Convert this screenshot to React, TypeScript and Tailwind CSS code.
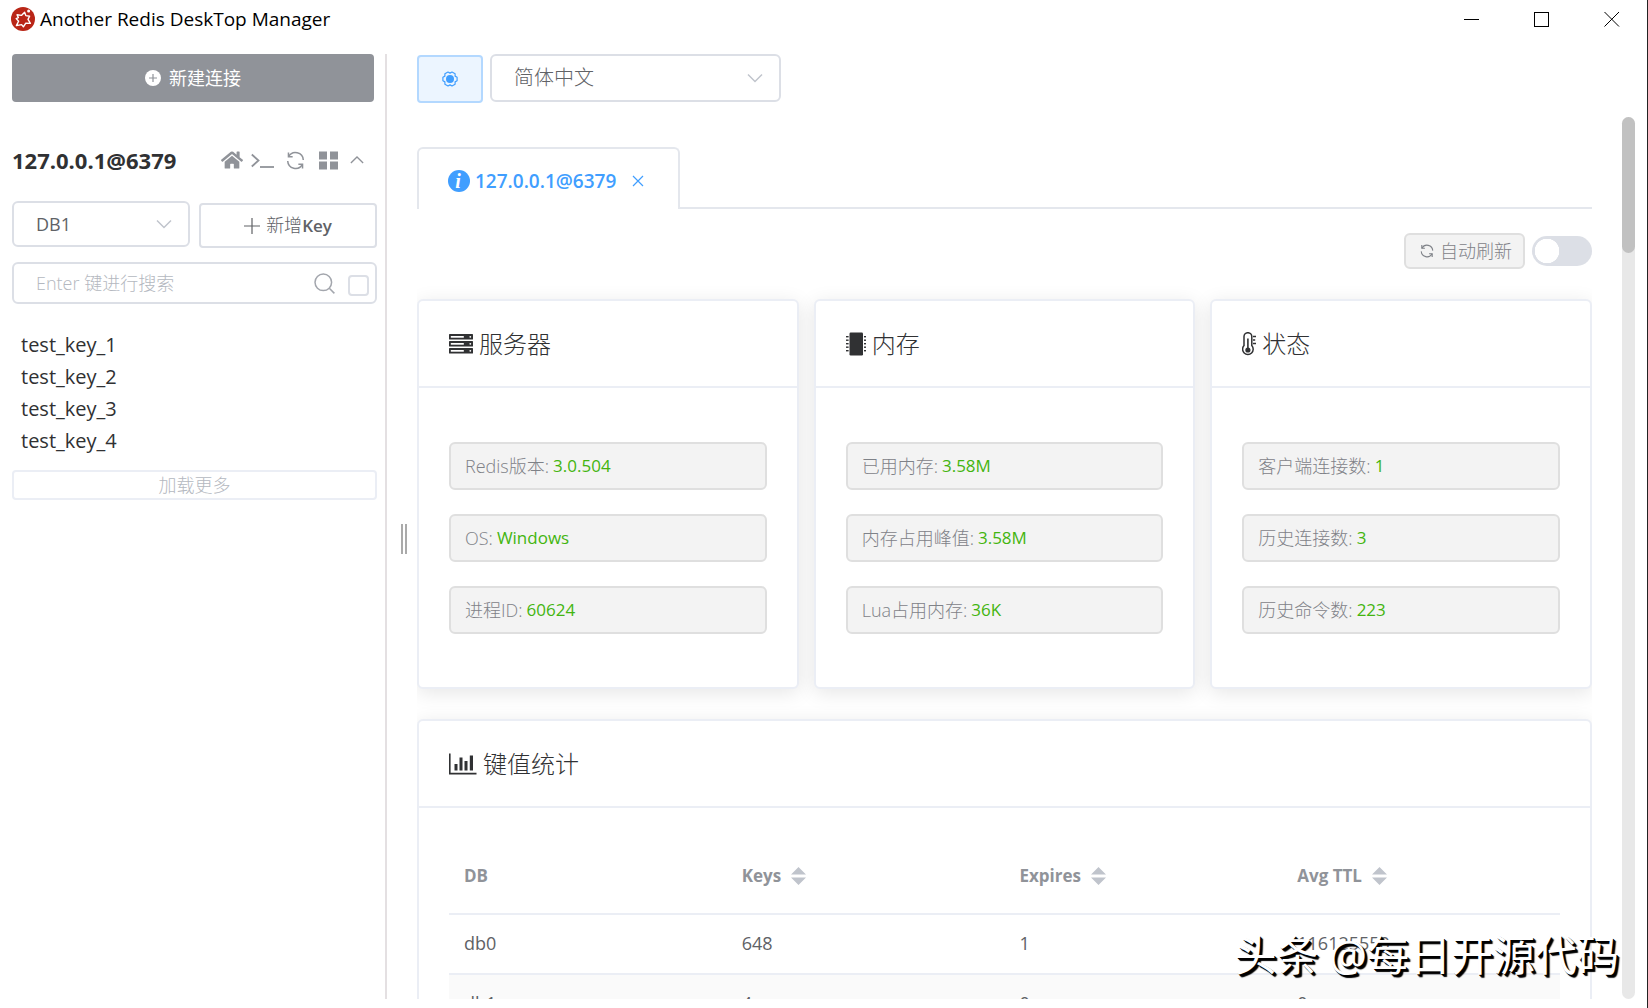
import React from "react";
import { FaHome } from "react-icons/fa";

const SANS =
  "font-['Open_Sans','Noto_Sans_CJK_SC',sans-serif]";

function Logo() {
  return (
    <svg className="size-6 shrink-0" viewBox="0 0 24 24" fill="none" aria-hidden="true">
      <circle cx="12" cy="12" r="12" fill="#b92617" />
      <path
        d="M6 7.8 L10.4 8.4 L13.6 5.2 L14.8 8.6 L18.6 9.2 L17 12.4 L19.4 16.4 L14.8 16.2 L12.4 19.8 L10.6 17.6 L5.4 18.6 L7.6 14.2 L5.2 11.6 L7.4 10.6 Z"
        stroke="#fff"
        strokeWidth="1.4"
        strokeLinejoin="round"
      />
      <circle cx="17.6" cy="4" r="1.5" fill="#fff" />
    </svg>
  );
}

function Chevron({ up = false, className = "" }: { up?: boolean; className?: string }) {
  return (
    <svg className={className} viewBox="0 0 16 10" fill="none" stroke="currentColor" strokeWidth="1.5" aria-hidden="true">
      <path d={up ? "M1 8.5 L8 1.5 L15 8.5" : "M1 1.5 L8 8.5 L15 1.5"} />
    </svg>
  );
}

function Refresh({ className = "" }: { className?: string }) {
  return (
    <svg className={className} viewBox="0 0 20 20" fill="none" stroke="currentColor" strokeWidth="1.6" aria-hidden="true">
      <path d="M2.6 1.5 V6 H7" />
      <path d="M2.8 6 A8.2 8.2 0 0 1 18.2 9.5" />
      <path d="M17.4 18.5 V14 H13" />
      <path d="M17.2 14 A8.2 8.2 0 0 1 1.8 10.5" />
    </svg>
  );
}

function ServerIcon() {
  return (
    <svg className="h-5 w-6" viewBox="0 0 24 20" fill="none" aria-hidden="true">
      {[0, 7, 14].map((y) => (
        <g key={y}>
          <rect x="0" y={y} width="24" height="5.6" rx="0.6" fill="#303133" />
          <rect x="1.8" y={y + 2} width="13" height="1.7" fill="#fff" />
          <circle cx="21.3" cy={y + 2.8} r="0.9" fill="#fff" />
        </g>
      ))}
    </svg>
  );
}

function MemoryIcon() {
  return (
    <svg className="h-6 w-5" viewBox="0 0 20 24" fill="#303133" aria-hidden="true">
      <rect x="3.5" y="0.5" width="13.5" height="23" rx="1.2" />
      {[4, 7.5, 11, 14.5, 18].map((y) => (
        <g key={y}>
          <rect x="0" y={y} width="2.6" height="1.4" />
          <rect x="18" y={y} width="2.6" height="1.4" />
        </g>
      ))}
    </svg>
  );
}

function ThermoIcon() {
  return (
    <svg className="h-6 w-3.5" viewBox="0 0 14 24" fill="none" stroke="#303133" aria-hidden="true">
      <path d="M2 13.6 V4.6 a3.9 3.9 0 0 1 7.8 0 V13.6 a5.3 5.3 0 1 1 -7.8 0 Z" strokeWidth="1.5" />
      <path d="M5.9 6.5 V18" strokeWidth="1.6" />
      <circle cx="5.9" cy="18" r="2.6" fill="#303133" stroke="none" />
      <path d="M11 4.5 h3 M11 8 h2.2 M11 11.5 h3" strokeWidth="1.4" />
    </svg>
  );
}

function ChartIcon() {
  return (
    <svg className="h-[22px] w-7" viewBox="0 0 28 22" fill="#303133" aria-hidden="true">
      <path d="M0 0.5 h1.6 V19.8 H27.5 V21.5 H0 Z" />
      <rect x="5.5" y="11" width="3" height="6.5" />
      <rect x="10.5" y="4.5" width="3" height="13" />
      <rect x="15.5" y="8" width="3" height="9.5" />
      <rect x="20.8" y="2.5" width="3.2" height="15" />
    </svg>
  );
}

function GearIcon() {
  return (
    <svg className="size-4" viewBox="0 0 16 16" fill="none" aria-hidden="true">
      <path
        d="M15.1 6.2 V9.8 L13.1 10.9 L13.1 13.2 L10 15 L8 13.9 L6 15 L2.9 13.2 L2.9 10.9 L0.9 9.8 V6.2 L2.9 5.1 L2.9 2.8 L6 1 L8 2.1 L10 1 L13.1 2.8 L13.1 5.1 Z"
        stroke="#409eff"
        strokeWidth="1.2"
        strokeLinejoin="round"
      />
      <circle cx="8" cy="8" r="4" fill="#409eff" />
    </svg>
  );
}

function TitleBar() {
  return (
    <header className="flex h-[54px] shrink-0 items-start justify-between pl-[11px]">
      <div className="flex h-[38px] items-center gap-[5px]">
        <Logo />
        <h1 className="text-[19px] text-black">Another Redis DeskTop Manager</h1>
      </div>
      <div className="flex h-[38px] text-black">
        <button aria-label="最小化" className="flex w-[70px] items-center justify-center">
          <svg className="size-4" viewBox="0 0 16 16" stroke="currentColor" shapeRendering="crispEdges"><path d="M0 8.5 H15" /></svg>
        </button>
        <button aria-label="最大化" className="flex w-[70px] items-center justify-center">
          <svg className="size-4" viewBox="0 0 16 16" stroke="currentColor" fill="none" shapeRendering="crispEdges"><rect x="0.5" y="1.5" width="14" height="14" /></svg>
        </button>
        <button aria-label="关闭" className="flex w-[70px] items-center justify-center">
          <svg className="size-4" viewBox="0 0 16 16" stroke="currentColor"><path d="M0.5 1 L15 15.5 M15 1 L0.5 15.5" /></svg>
        </button>
      </div>
    </header>
  );
}

function SelectBox({ label, value, className }: { label: string; value: string; className: string }) {
  return (
    <div className={"relative " + className}>
      <select
        aria-label={label}
        defaultValue={value}
        className="h-full w-full appearance-none rounded-md border-2 border-[#dcdfe6] bg-white px-[22px] text-[#606266]"
      >
        <option>{value}</option>
      </select>
      <Chevron className="pointer-events-none absolute top-1/2 right-[18px] h-2.5 w-4 -translate-y-1/2 text-[#c0c4cc]" />
    </div>
  );
}

const KEYS = ["test_key_1", "test_key_2", "test_key_3", "test_key_4"];

function Sidebar() {
  return (
    <aside className="flex w-[387px] shrink-0 flex-col border-r-2 border-[#e4e0e2] pr-2 pl-3">
      <button className="mr-[3px] flex h-12 items-center justify-center gap-2 rounded bg-[#909399] text-[18px] text-white">
        <svg className="size-4" viewBox="0 0 16 16" aria-hidden="true">
          <circle cx="8" cy="8" r="8" fill="#fff" />
          <path d="M8 4 V12 M4 8 H12" stroke="#909399" strokeWidth="1.2" />
        </svg>
        新建连接
      </button>

      <div className="mt-10 flex h-9 items-center justify-between pr-[13px]">
        <h2 className="text-[22px] font-bold text-[#303133]">127.0.0.1@6379</h2>
        <div className="flex items-center text-[#909399]">
          <button aria-label="主页" className="mr-2"><FaHome className="size-[22px]" /></button>
          <button aria-label="控制台" className="mr-3">
            <svg className="h-4 w-[23px]" viewBox="0 0 23 16" fill="none" stroke="currentColor" strokeWidth="1.8"><path d="M0.8 2.5 L7.5 8.5 L0.8 14.5" /><path d="M9 15 H23" /></svg>
          </button>
          <button aria-label="刷新" className="mr-3.5"><Refresh className="size-[19px]" /></button>
          <button aria-label="菜单" className="mr-3">
            <svg className="size-[19px]" viewBox="0 0 19 19" fill="currentColor"><path d="M0 0.5 h8 v8 h-8 z M11 0.5 h8 v8 h-8 z M0 10.5 h8 v8 h-8 z M11 10.5 h8 v8 h-8 z" /></svg>
          </button>
          <button aria-label="收起"><Chevron up className="h-2.5 w-3.5" /></button>
        </div>
      </div>

      <div className="mt-[23px] grid grid-cols-2 gap-[9px] text-[18px] text-[#606266]">
        <SelectBox label="DB" value="DB1" className="h-[46px]" />
        <button className="mt-0.5 flex h-[45px] items-center justify-center gap-1.5 rounded border-2 border-[#dcdfe6]">
          <svg className="size-4" viewBox="0 0 16 16" stroke="currentColor" strokeWidth="1.2" aria-hidden="true"><path d="M8 0 V16 M0 8 H16" /></svg>
          <span className="font-light">新增<span className="text-[17px] font-semibold">Key</span></span>
        </button>
      </div>

      <div className="mt-3.5 flex h-[42px] items-center rounded-md border-2 border-[#dcdfe6] pr-1.5 pl-[22px]">
        <input
          aria-label="搜索"
          placeholder="Enter 键进行搜索"
          className="min-w-0 flex-1 text-[18px] font-light outline-none placeholder:text-[#b4b8c0]"
        />
        <svg className="mr-[13px] size-[21px] text-[#a3a6ad]" viewBox="0 0 21 21" fill="none" stroke="currentColor" strokeWidth="1.5" aria-hidden="true">
          <circle cx="9.3" cy="9.3" r="8.3" />
          <path d="M15.3 15.3 L20.4 20.4" />
        </svg>
        <input type="checkbox" aria-label="精确搜索" className="mt-1 size-[21px] appearance-none rounded-sm border-2 border-[#dcdfe6] bg-white" />
      </div>

      <ul className="mt-[25px] pl-[9px] text-[20px] leading-8 text-[#303133]">
        {KEYS.map((k) => (
          <li key={k}>{k}</li>
        ))}
      </ul>
      <button className="mt-[13px] flex h-[30px] items-center justify-center rounded border-2 border-[#ebeef5] text-[18px] font-light text-[#b4b8c0]">
        加载更多
      </button>
    </aside>
  );
}

type Stat = [string, string];

function CardHeader({ icon, title }: { icon: React.ReactNode; title: string }) {
  return (
    <div className="flex h-[87px] items-center gap-1.5 border-b-2 border-[#ebeef5] px-[30px]">
      {icon}
      <h3 className="text-2xl font-light text-[#303133]">{title}</h3>
    </div>
  );
}

function StatCard({ icon, title, stats }: { icon: React.ReactNode; title: string; stats: Stat[] }) {
  return (
    <section className="rounded-md border-2 border-[#ebeef5] bg-white shadow-[0_4px_20px_rgba(0,0,0,0.1)]">
      <CardHeader icon={icon} title={title} />
      <dl className="flex flex-col gap-6 px-[30px] pt-[54px] pb-[53px]">
        {stats.map(([k, v]) => (
          <div key={k} className="flex h-12 items-center gap-1 rounded-md border-2 border-[#dfdfdf] bg-[#f3f3f3] px-3.5">
            <dt className="text-[18px] font-light text-[#7f8288]">{k}:</dt>
            <dd className="text-[17px] text-[#43b50f]">{v}</dd>
          </div>
        ))}
      </dl>
    </section>
  );
}

const ROWS = [
  ["db0", "648", "1", "116125550"],
  ["db1", "4", "0", "0"],
];

function StatsTable() {
  return (
    <section className="mt-[30px] rounded-md border-2 border-[#ebeef5] bg-white shadow-[0_4px_20px_rgba(0,0,0,0.1)]">
      <CardHeader icon={<ChartIcon />} title="键值统计" />
      <div className="px-[30px] pt-[30px] pb-[30px]">
        <table className="w-full table-fixed border-collapse text-left text-[18px] text-[#606266]">
          <thead>
            <tr className="h-[76px] border-b-2 border-[#ebeef5] text-[17px] text-[#909399]">
              {["DB", "Keys", "Expires", "Avg TTL"].map((h, i) => (
                <th key={h} scope="col" className="px-[15px] font-bold">
                  <span className="flex items-center gap-2.5">
                    {h}
                    {i > 0 && (
                      <svg className="h-[18px] w-[15px]" viewBox="0 0 15 18" fill="#c0c4cc" aria-hidden="true">
                        <path d="M7.5 0 L15 7.5 H0 Z M0 10.5 H15 L7.5 18 Z" />
                      </svg>
                    )}
                  </span>
                </th>
              ))}
            </tr>
          </thead>
          <tbody>
            {ROWS.map((r) => (
              <tr key={r[0]} className="h-[60px] border-b-2 border-[#ebeef5] even:bg-[#fafafa]">
                {r.map((c, i) => (
                  <td key={i} className="px-[15px] pb-0.5">{c}</td>
                ))}
              </tr>
            ))}
          </tbody>
        </table>
      </div>
    </section>
  );
}

function Main() {
  return (
    <main className="flex min-w-0 flex-1 flex-col">
      <div className="flex h-[63px] shrink-0 items-start gap-[7px] text-[20px] font-light">
        <button aria-label="设置" className="mt-px flex h-12 w-[66px] items-center justify-center rounded border-2 border-[#b3d8ff] bg-[#ecf5ff]">
          <GearIcon />
        </button>
        <SelectBox label="语言" value="简体中文" className="h-12 w-[291px]" />
      </div>

      <div className="flex min-h-0 flex-1">
        <div className="min-w-0 flex-1 overflow-hidden pt-[30px]">
          <div className="flex">
            <div className="flex h-[62px] w-[263px] items-center rounded-t-md border-2 border-b-0 border-[#e4e7ed] pt-1 pl-[29px] text-[19px] font-semibold text-[#409eff]">
              <span aria-hidden="true" className="mr-[5px] flex size-[22px] items-center justify-center rounded-full bg-[#409eff] pr-0.5 font-['Liberation_Serif',serif] text-[20px] leading-none font-bold text-white italic">
                i
              </span>
              <span>127.0.0.1@6379</span>
              <button aria-label="关闭标签" className="ml-4">
                <svg className="size-3" viewBox="0 0 12 12" stroke="currentColor" strokeWidth="1.2"><path d="M1 1 L11 11 M11 1 L1 11" /></svg>
              </button>
            </div>
            <div className="flex-1 border-b-2 border-[#e4e7ed]" />
          </div>

          <div className="mt-6 flex items-center justify-end gap-[7px]">
            <span className="flex h-9 items-center gap-1.5 rounded-md border-2 border-[#dfdfdf] bg-[#f3f3f3] pr-[11px] pl-3.5 text-[18px] font-light text-[#7f8288]">
              <Refresh className="size-3.5" />
              自动刷新
            </span>
            <input
              type="checkbox"
              role="switch"
              aria-label="自动刷新"
              className="h-[30px] w-[60px] appearance-none rounded-full bg-[#dcdfe6] bg-[radial-gradient(circle_at_15px_15px,#fff_12px,transparent_12.5px)]"
            />
          </div>

          <div className="mt-[30px] grid grid-cols-3 gap-[15px]">
            <StatCard icon={<ServerIcon />} title="服务器" stats={[["Redis版本", "3.0.504"], ["OS", "Windows"], ["进程ID", "60624"]]} />
            <StatCard icon={<MemoryIcon />} title="内存" stats={[["已用内存", "3.58M"], ["内存占用峰值", "3.58M"], ["Lua占用内存", "36K"]]} />
            <StatCard icon={<ThermoIcon />} title="状态" stats={[["客户端连接数", "1"], ["历史连接数", "3"], ["历史命令数", "223"]]} />
          </div>
          <StatsTable />
        </div>
        <div className="mr-3 ml-[30px] w-[13px] shrink-0 rounded-full bg-[#e8e8e8]">
          <div className="h-[136px] rounded-full bg-[#c1c1c1]" />
        </div>
      </div>
    </main>
  );
}

export default function App() {
  return (
    <div className={"relative flex h-screen flex-col overflow-hidden border-r border-[#222] bg-white pb-[9px] " + SANS}>
      <TitleBar />
      <div className="flex min-h-0 flex-1">
        <Sidebar />
        <div className="flex w-[30px] shrink-0 items-center justify-center pt-6 pl-1">
          <div className="h-[30px] w-1.5 border-x-2 border-[#aaa]" />
        </div>
        <Main />
      </div>
      <p className="pointer-events-none absolute right-7 bottom-8 text-[42px] leading-none whitespace-nowrap text-white [text-shadow:1px_1px_0_#000,2px_2px_0_#000,3px_3px_1px_#000]">
        头条 @每日开源代码
      </p>
    </div>
  );
}
